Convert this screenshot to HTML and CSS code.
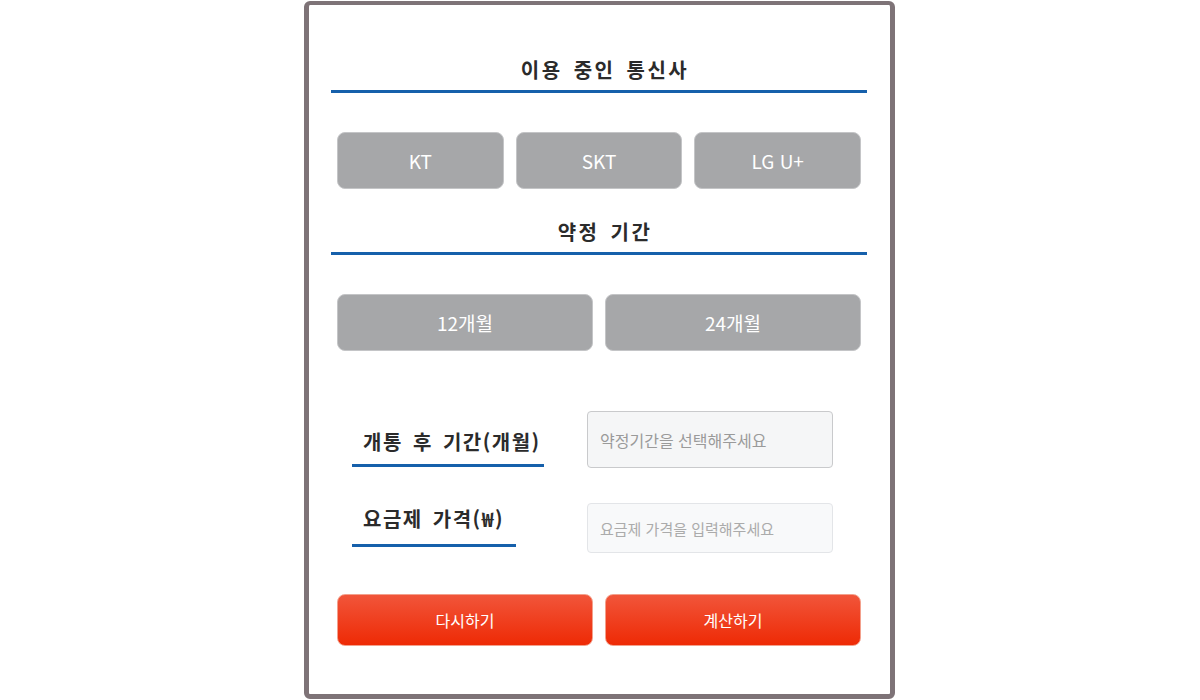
FILE: index.html
```html
<!DOCTYPE html>
<html lang="ko">
<head>
<meta charset="utf-8">
<title>요금 계산기</title>
<link rel="stylesheet" href="styles.css">
</head>
<body>
<main class="card">
  <h2 class="title">이용 중인 통신사</h2>
  <div class="choices three">
    <button class="choice">KT</button>
    <button class="choice">SKT</button>
    <button class="choice">LG U+</button>
  </div>
  <h2 class="title title-second">약정 기간</h2>
  <div class="choices two">
    <button class="choice">12개월</button>
    <button class="choice">24개월</button>
  </div>
  <div class="field field-first">
    <label class="label label-wide">개통 후 기간(개월)</label>
    <div class="input input-select">약정기간을 선택해주세요</div>
  </div>
  <div class="field field-second">
    <label class="label label-narrow">요금제 가격(₩)</label>
    <div class="input input-text">요금제 가격을 입력해주세요</div>
  </div>
  <div class="actions">
    <button class="action">다시하기</button>
    <button class="action">계산하기</button>
  </div>
</main>
</body>
</html>
```
FILE: styles.css
```css
* { box-sizing: border-box; }
html, body { margin: 0; padding: 0; background: #fff; }
body {
  font-family: "Noto Sans CJK KR", "Noto Sans", sans-serif;
  color: #2b2b2b;
  height: 700px;
  overflow: hidden;
}
.card {
  width: 591px;
  height: 698px;
  margin: 1px 0 0 304px;
  border: 5px solid #7e7377;
  border-top-width: 4px;
  border-radius: 6px;
  background: #fff;
  padding: 51px 23px 0 22px;
}
.title {
  margin: 0;
  font-size: 20px;
  line-height: 28px;
  font-weight: 700;
  letter-spacing: 2.5px;
  word-spacing: 3px;
  text-align: center;
  padding: 0 0 6px 12px;
  border-bottom: 3px solid #1660ab;
  color: #2b2b2b;
}
.title-second { margin-top: 29px; }
.choices {
  display: grid;
  gap: 12px;
  padding: 0 6px;
  margin-top: 39px;
}
.choices.three { grid-template-columns: repeat(3, 1fr); }
.choices.two { grid-template-columns: repeat(2, 1fr); margin-top: 39px; }
.choice {
  height: 57px;
  border: 1px solid #c4c5c7;
  border-radius: 8px;
  background: #a6a7a9;
  color: #fff;
  font-family: "Noto Sans CJK KR", "Noto Sans", sans-serif;
  font-size: 19px;
  font-weight: 400;
  padding: 0;
}
.field {
  display: flex;
  padding-left: 21px;
}
.field-first { margin-top: 60px; align-items: flex-end; }
.field-second { margin-top: 35px; align-items: center; }
.label {
  display: block;
  font-size: 20px;
  line-height: 28px;
  font-weight: 700;
  letter-spacing: 1.5px;
  word-spacing: 3px;
  color: #2b2b2b;
  padding-left: 11px;
  white-space: nowrap;
  border-bottom: 3px solid #1660ab;
  margin-right: auto;
}
.label-wide { width: 192px; padding-bottom: 8px; margin-bottom: 1px; }
.label-narrow { width: 164px; padding-bottom: 11px; margin-bottom: 5px; }
.input {
  width: 246px;
  margin-right: 34px;
  display: flex;
  align-items: center;
  padding-left: 12px;
  border-radius: 4px;
  white-space: nowrap;
}
.input-select {
  height: 57px;
  background: #f5f6f7;
  border: 1px solid #c9cacc;
  color: #9a9a9a;
  font-size: 16px;
}
.input-text {
  height: 50px;
  background: #f8f9fa;
  border: 1px solid #e3e5e8;
  color: #ababab;
  font-size: 15px;
}
.actions {
  display: grid;
  grid-template-columns: 1fr 1fr;
  gap: 12px;
  padding: 0 6px;
  margin-top: 41px;
}
.action {
  height: 52px;
  border: 1px solid #f3a08c;
  border-radius: 8px;
  background: linear-gradient(to bottom, #f1553a, #ee2a05);
  color: #fff;
  font-family: "Noto Sans CJK KR", "Noto Sans", sans-serif;
  font-size: 16px;
  padding: 0;
}
```
